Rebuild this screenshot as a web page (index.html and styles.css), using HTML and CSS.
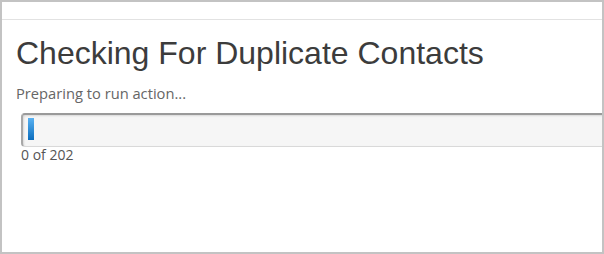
FILE: index.html
```html
<!DOCTYPE html>
<html>
<head>
<meta charset="utf-8">
<link rel="stylesheet" href="styles.css">
</head>
<body>
<div class="frame">
  <div class="topbar"></div>
  <div class="content">
    <h1 class="title">Checking For Duplicate Contacts</h1>
    <p class="status">Preparing to run action...</p>
    <div class="progress">
      <div class="progress-fill"></div>
    </div>
    <div class="count">0 of 202</div>
  </div>
</div>
</body>
</html>
```

FILE: styles.css
```css
html, body {
  margin: 0;
  padding: 0;
  background: #ffffff;
}
.frame {
  width: 604px;
  height: 254px;
  box-sizing: border-box;
  border: 2px solid #c3c3c3;
  overflow: hidden;
  background: #fff;
}
.topbar {
  height: 17px;
  border-bottom: 1px solid #e2e2e2;
}
.content {
  padding: 0 0 0 14px;
}
.title {
  margin: 15px 0 0 0;
  font-family: "Liberation Sans", Arial, sans-serif;
  font-weight: normal;
  font-size: 32px;
  line-height: 36px;
  color: #3c3c3c;
}
.status {
  margin: 13px 0 0 0;
  font-family: "Open Sans", Lato, sans-serif;
  font-size: 14.7px;
  line-height: 18px;
  color: #666666;
}
.progress {
  margin: 11px 0 0 5px;
  width: 620px;
  height: 34px;
  box-sizing: border-box;
  border: 1px solid #d9d9d9;
  border-top: 2px solid #9a9a9a;
  border-left: 2px solid #a8a8a8;
  border-radius: 4px;
  background: #f6f6f6;
  box-shadow: inset 1px 1px 2px rgba(0,0,0,0.12);
  padding: 3px 0 0 5px;
}
.progress-fill {
  width: 6px;
  height: 22px;
  background: linear-gradient(to bottom, #5ab2f2, #0b6dbd);
}
.count {
  margin: 0 0 0 5px;
  font-family: "Open Sans", Lato, sans-serif;
  font-size: 14px;
  line-height: 16px;
  color: #555555;
}
```
